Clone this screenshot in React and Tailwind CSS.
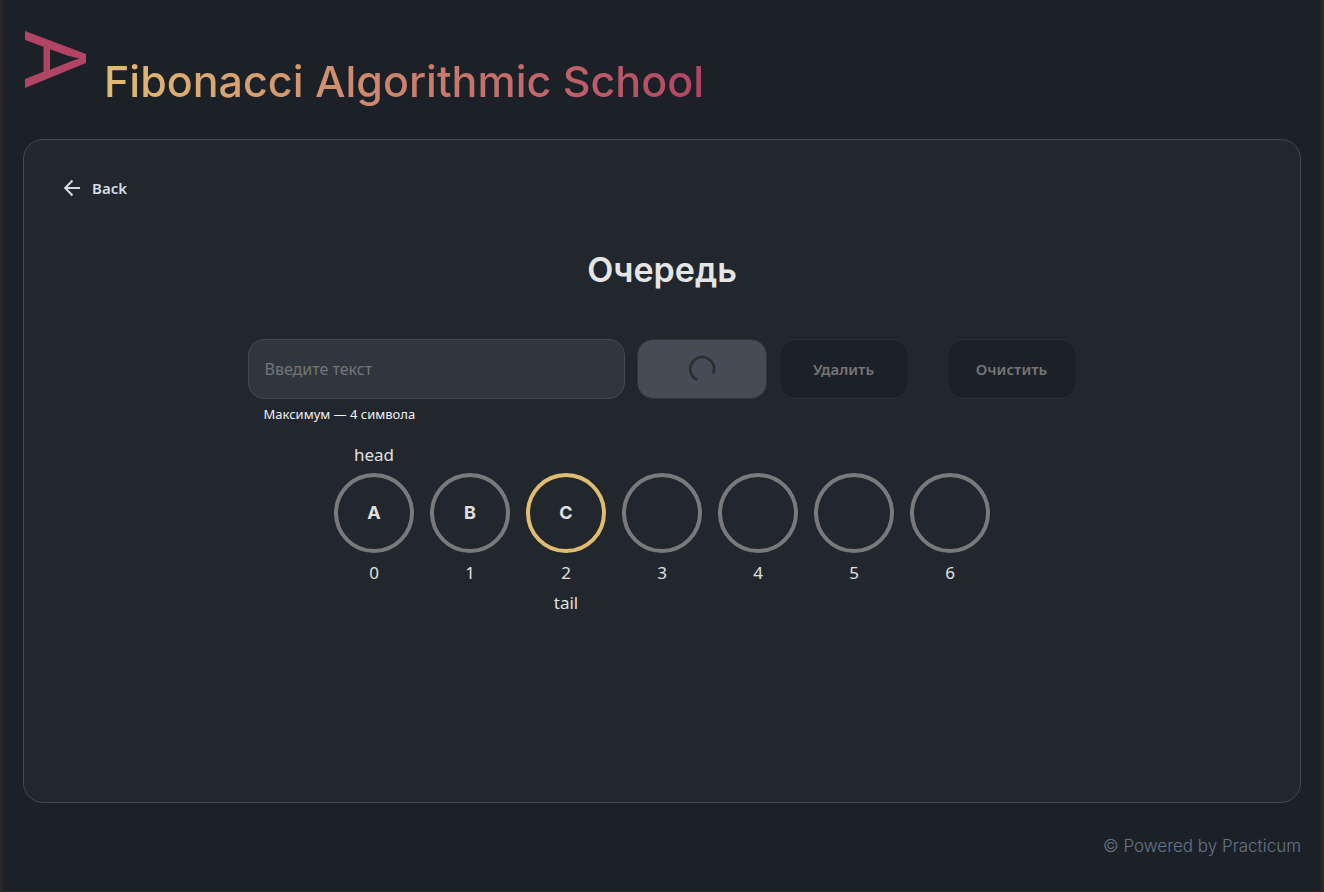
import React from "react";

const items = ["A", "B", "C", "", "", "", ""];

function Logo() {
  return (
    <svg className="block h-[57px] w-[61px]" viewBox="0 0 61 57" aria-hidden="true">
      <path
        fill="#b24464"
        fillRule="evenodd"
        d="M0 0 L61 23 V32 L0 57 V48 L18.5 40.7 V15.7 L0 9 Z M25 18.3 V38.8 L43 31.6 Q49 29.2 54.5 27.6 Q49 26.4 43 24.8 Z"
      />
    </svg>
  );
}

function Spinner() {
  return (
    <svg className="h-8 w-8" viewBox="0 0 32 32" fill="none" aria-hidden="true">
      <path d="M11.2 27 A12 12 0 1 1 27.2 20.8" stroke="#2d2d2d" strokeWidth="2.6" />
    </svg>
  );
}

function ActionButton({ children }) {
  return (
    <button
      type="button"
      disabled
      className="h-[60px] w-[130px] rounded-2xl border border-[#2a2f38] bg-[#1c2027] text-[15px] font-semibold text-[#757575]"
    >
      {children}
    </button>
  );
}

function QueueItem({ value, index }) {
  const active = index === 2;
  return (
    <li className="flex w-20 flex-col items-center text-[17px] text-[#e0e0e0]">
      <span className="h-[30px] leading-6">{index === 0 ? "head" : ""}</span>
      <div
        className={`flex h-20 w-20 items-center justify-center rounded-full border-4 font-[Inter,sans-serif] text-lg font-bold ${
          active ? "border-[#e0bb72]" : "border-[#7a7a7a]"
        }`}
      >
        {value}
      </div>
      <span className="mt-2 leading-6">{index}</span>
      <span className="mt-[6px] h-6 leading-6">{active ? "tail" : ""}</span>
    </li>
  );
}

export default function App() {
  return (
    <div className="flex min-h-screen flex-col border-x-[3px] border-b border-[#292929] bg-[#1c2127] px-5 font-['Noto_Sans',sans-serif]">
      <header className="flex h-[139px] items-start px-[2px] pt-[31px]">
        <Logo />
        <h1 className="ml-[18px] mt-6 bg-linear-to-r from-[#e0bb72] to-[#b24464] bg-clip-text font-[Inter,sans-serif] text-[43px] font-medium leading-[52px] text-transparent">
          Fibonacci Algorithmic School
        </h1>
      </header>

      <main className="flex grow flex-col rounded-[20px] border border-[#444951] bg-[#22272e] px-[38px] pt-9">
        <a href="#" className="flex h-6 items-center gap-[10px] self-start text-[15px] font-semibold text-[#d5dce5]">
          <svg className="h-5 w-5" viewBox="0 0 20 20" fill="none" stroke="currentColor" strokeWidth="2" aria-hidden="true">
            <path d="M18 10H3.5M10.5 2.5L3.2 10L10.5 17.5" />
          </svg>
          Back
        </a>

        <h2 className="mt-[50px] text-center font-[Inter,sans-serif] text-[34px] font-semibold leading-10 text-[#e5e5e5]">
          Очередь
        </h2>

        <form className="mx-auto mt-[49px] flex w-full max-w-[829px] items-start">
          <div className="min-w-0 flex-1">
            <input
              id="value"
              type="text"
              maxLength={4}
              aria-label="Введите текст"
              placeholder="Введите текст"
              className="block h-[60px] w-full rounded-2xl border border-[#444951] bg-[#2f363e] px-4 text-base text-[#e0e0e0] placeholder-[#757575]"
            />
            <label htmlFor="value" className="ml-4 mt-1 block text-[13px] leading-[22px] text-[#f0f0f0]">
              Максимум — 4 символа
            </label>
          </div>
          <div className="ml-3 flex gap-3">
            <button
              type="button"
              disabled
              aria-label="Добавить"
              className="flex h-[60px] w-[130px] items-center justify-center rounded-2xl border border-[#2f353d] bg-[#454c55]"
            >
              <Spinner />
            </button>
            <ActionButton>Удалить</ActionButton>
          </div>
          <div className="ml-[38px]">
            <ActionButton>Очистить</ActionButton>
          </div>
        </form>

        <ul className="mt-[18px] flex justify-center gap-4 pb-10">
          {items.map((value, index) => (
            <QueueItem key={index} value={value} index={index} />
          ))}
        </ul>
      </main>

      <footer className="flex h-[88px] items-center justify-end font-[Inter,sans-serif] text-[17px] font-light text-[#64758a]">
        © Powered by Practicum
      </footer>
    </div>
  );
}
